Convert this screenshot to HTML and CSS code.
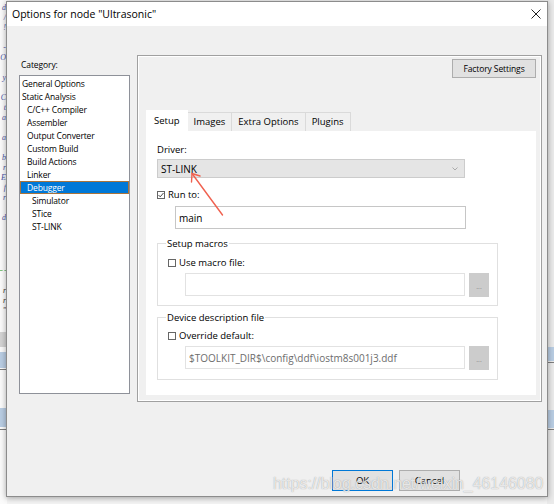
FILE: index.html
```html
<!DOCTYPE html>
<html>
<head>
<meta charset="utf-8">
<link rel="stylesheet" href="styles.css">
</head>
<body>
<div class="desk">
  <div class="bg-left">
    <pre class="code">d
/
!

-
O

y

C
t
a

a

b
r
E
f
r

d</pre>
    <div class="gdash"></div>
    <pre class="code code2">r
r
"</pre>
    <div class="band gray b1"></div>
    <div class="band blue b2"></div>
    <div class="band line b3"></div>
    <div class="band blue b4"></div>
    <div class="band line b5"></div>
  </div>
  <div class="bg-right">
    <div class="band blue r1"></div>
    <div class="band line r2"></div>
    <div class="band blue r3"></div>
    <div class="band line r4"></div>
  </div>

  <div class="dialog">
    <div class="titlebar">
      <span class="title">Options for node "Ultrasonic"</span>
      <svg class="close" width="10" height="10" viewBox="0 0 10 10"><path d="M0.5 0.5 L9.5 9.5 M9.5 0.5 L0.5 9.5" stroke="#222" stroke-width="1" fill="none"/></svg>
    </div>
    <div class="body">
      <div class="main">
        <div class="catcol">
          <div class="catlabel">Category:</div>
          <ul class="list">
            <li class="l0">General Options</li>
            <li class="l0">Static Analysis</li>
            <li class="l1">C/C++ Compiler</li>
            <li class="l1">Assembler</li>
            <li class="l1">Output Converter</li>
            <li class="l1">Custom Build</li>
            <li class="l1">Build Actions</li>
            <li class="l1">Linker</li>
            <li class="l1 sel">Debugger</li>
            <li class="l2">Simulator</li>
            <li class="l2">STice</li>
            <li class="l2">ST-LINK</li>
          </ul>
        </div>
        <div class="panel">
          <div class="factory-row"><div class="btn factory">Factory Settings</div></div>
          <div class="tabs">
            <div class="tab active">Setup</div>
            <div class="tab">Images</div>
            <div class="tab">Extra Options</div>
            <div class="tab">Plugins</div>
          </div>
          <div class="tabpage">
            <div class="lbl">Driver:</div>
            <div class="combo"><span>ST-LINK</span><svg class="chev" width="6" height="4" viewBox="0 0 6 4"><path d="M0.5 0.5 L3 3 L5.5 0.5" stroke="#9a9a9a" fill="none" stroke-width="0.8"/></svg></div>
            <div class="chkrow runto"><span class="chk"><svg width="8" height="8" viewBox="0 0 8 8"><path d="M1.5 4 L3.2 5.8 L6.5 2" stroke="#333" fill="none" stroke-width="0.9"/></svg></span>Run to:</div>
            <div class="input main-in">main</div>
            <fieldset class="group g1">
              <legend>Setup macros</legend>
              <div class="chkrow"><span class="chk"></span>Use macro file:</div>
              <div class="filerow">
                <div class="input dis"></div>
                <div class="browse">...</div>
              </div>
            </fieldset>
            <fieldset class="group g2">
              <legend>Device description file</legend>
              <div class="chkrow"><span class="chk"></span>Override default:</div>
              <div class="filerow">
                <div class="input dis path">$TOOLKIT_DIR$\config\ddf\iostm8s001j3.ddf</div>
                <div class="browse">...</div>
              </div>
            </fieldset>
          </div>
        </div>
      </div>
      <div class="buttons">
        <div class="btn ok">OK</div>
        <div class="btn">Cancel</div>
      </div>
    </div>
  </div>

  <svg class="arrow" width="554" height="504" viewBox="0 0 554 504">
    <path d="M222.5 215 L192 173.5" stroke="#f0614f" stroke-width="1.4" fill="none" stroke-linecap="round"/>
    <path d="M191.5 182 L192 173.5 L200 176" stroke="#f0614f" stroke-width="1.4" fill="none" stroke-linecap="round" stroke-linejoin="round"/>
  </svg>
  <div class="watermark">https://blog.csdn.net/weixin_46146080</div>
</div>
</body>
</html>
```

FILE: styles.css
```css
* { box-sizing: border-box; }
html, body { margin: 0; padding: 0; }
body {
  width: 554px;
  height: 504px;
  overflow: hidden;
  font-family: "Open Sans", "Noto Sans", "Liberation Sans", sans-serif;
  font-size: 9.5px;
  color: #000;
}
.desk {
  position: relative;
  width: 554px;
  height: 504px;
  background: #f4f4f4;
  overflow: hidden;
}

/* backdrop */
.bg-left {
  position: absolute;
  left: 0; top: 0;
  width: 7px; height: 504px;
  background: #fbfbfb;
  overflow: hidden;
}
.code {
  margin: 0;
  padding: 3px 1px 0 0;
  width: 7px;
  text-align: right;
  font-family: "Liberation Serif", serif;
  font-style: italic;
  font-size: 8px;
  line-height: 10px;
  color: #4b57a6;
}
.gdash {
  position: absolute; left: 0; top: 270px; width: 7px; height: 0;
  border-top: 1px dashed #7fc27f;
}
.code2 { position: absolute; top: 283px; left: 0; color: #333; }
.band { position: absolute; left: 0; width: 100%; }
.gray { background: #d3d3d3; }
.blue { background: #b9cde3; }
.line { background: #7d7d7d; height: 1px; }
.b1 { top: 332px; height: 15px; }
.b2 { top: 352px; height: 16px; }
.b3 { top: 369px; }
.b4 { top: 408px; height: 19px; }
.b5 { top: 429px; }
.bg-right {
  position: absolute; right: 0; top: 0;
  width: 7px; height: 504px;
  background: #ebebeb;
}
.r1 { top: 347px; height: 14px; }
.r2 { top: 362px; }
.r3 { top: 410px; height: 18px; }
.r4 { top: 429px; }

/* dialog */
.dialog {
  position: absolute;
  left: 6px; top: 1px;
  width: 542px; height: 496px;
  border: 1px solid #8c8c8c;
  background: #f0f0f0;
  box-shadow: 0 1px 6px rgba(0,0,0,0.35);
  display: flex;
  flex-direction: column;
}
.titlebar {
  height: 24px;
  background: #fff;
  display: flex;
  align-items: center;
  justify-content: space-between;
  padding: 0 6px 0 5px;
  flex: none;
}
.title { font-size: 10.5px; color: #000; }
.close { display: block; }
.body {
  flex: 1;
  padding: 29px 0 0 12px;
  display: flex;
  flex-direction: column;
}
.main {
  display: flex;
  gap: 7px;
  height: 347px;
}
.catcol { width: 111px; display: flex; flex-direction: column; }
.catlabel {
  height: 20px; line-height: 20px; padding-left: 2px;
  font-size: 8.5px; letter-spacing: -0.1px;
}
.list {
  list-style: none;
  margin: 0;
  padding: 1px 0 0 0;
  height: 319px;
  background: #fff;
  border: 1px solid #8e9199;
  font-size: 8.5px;
  letter-spacing: -0.15px;
}
.list li { height: 13px; line-height: 13px; white-space: nowrap; }
.l0 { padding-left: 2px; }
.l1 { padding-left: 7px; }
.l2 { padding-left: 12px; }
.list li.sel {
  background: #0078d7;
  color: #fff;
  outline: 1px solid #a9743c;
  outline-offset: -1px;
}

.panel {
  width: 405px;
  height: 347px;
  border: 1px solid #a0a0a0;
  box-shadow: inset 1px 1px 0 #fff, inset -1px -1px 0 #fff;
  display: flex;
  flex-direction: column;
  padding: 3px 5px 0 8px;
}
.factory-row { display: flex; justify-content: flex-end; }
.btn {
  height: 19px;
  background: #e1e1e1;
  border: 1px solid #adadad;
  display: flex;
  align-items: center;
  justify-content: center;
}
.factory { width: 84px; font-size: 8.5px; letter-spacing: -0.1px; }
.tabs {
  display: flex;
  align-items: flex-end;
  margin-top: 33px;
  height: 20px;
}
.tab {
  height: 19px;
  line-height: 18px;
  padding: 0 6px;
  background: #f0f0f0;
  border: 1px solid #dadada;
  border-bottom: none;
  margin-left: -1px;
}
.tab:first-child { margin-left: 0; }
.tab.active {
  height: 21px;
  background: #fff;
  border-color: #fff;
  padding: 0 7px;
  line-height: 20px;
  position: relative;
  z-index: 1;
}
.tabpage {
  width: 390px;
  height: 264px;
  background: #fff;
  padding: 12px 0 0 11px;
}
.lbl { height: 13px; line-height: 13px; }
.combo {
  margin-top: 3px;
  width: 308px;
  height: 19px;
  background: #e5e5e5;
  border: 1px solid #cccccc;
  display: flex;
  align-items: center;
  justify-content: space-between;
  padding: 0 6px 0 3px;
  font-size: 10px;
}
.chev { display: block; }
.chkrow {
  height: 13px;
  line-height: 13px;
  display: flex;
  align-items: center;
  white-space: nowrap;
}
.runto { margin-top: 10px; }
.chk {
  width: 8px; height: 8px;
  border: 1px solid #666;
  background: #fff;
  margin-right: 3px;
  display: inline-flex;
  align-items: center;
  justify-content: center;
}
.chk svg { display: block; margin: -1px; }
.input {
  height: 23px;
  background: #fff;
  border: 1px solid #c6c6c6;
  display: flex;
  align-items: center;
  padding-left: 3px;
  font-size: 10px;
}
.main-in { margin: 5px 0 0 18px; width: 291px; }
.group {
  margin: 8px 0 0 0;
  width: 341px;
  border: 1px solid #e0e0e0;
  padding: 0 0 8px 10px;
}
.group legend {
  height: 13px;
  line-height: 13px;
  padding: 0 1px;
  margin-left: -2px;
}
.group .chkrow { margin-top: 6px; }
.filerow { display: flex; gap: 4px; margin: 4px 0 0 17px; }
.input.dis { width: 280px; border-color: #e2e2e2; }
.path { color: #6d6d6d; font-size: 10px; }
.browse {
  width: 20px;
  height: 24px;
  background: #cccccc;
  color: #8a8a8a;
  font-size: 7px;
  display: flex;
  align-items: center;
  justify-content: center;
  padding-top: 3px;
}
.g2 { margin-top: 5px; padding-bottom: 9px; }
.g2 .chkrow { margin-top: 5px; }

.buttons {
  display: flex;
  justify-content: flex-end;
  gap: 6px;
  margin-top: 68px;
  padding-right: 87px;
}
.buttons .btn { width: 61px; height: 21px; }
.btn.ok { border-color: #0078d7; }

.arrow { position: absolute; left: 0; top: 0; pointer-events: none; }
.watermark {
  position: absolute;
  left: 273px; top: 475px;
  font-family: "Liberation Sans", Arial, sans-serif;
  font-size: 15.9px;
  color: rgba(255,255,255,0.75);
  text-shadow: 0 0 1px rgba(110,110,110,0.7);
  white-space: nowrap;
}
```
